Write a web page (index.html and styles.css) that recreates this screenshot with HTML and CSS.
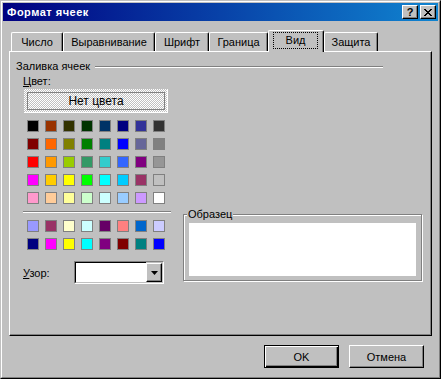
FILE: index.html
```html
<!DOCTYPE html>
<html lang="ru">
<head>
  <meta charset="UTF-8">
  <title>Формат ячеек</title>
  <link rel="stylesheet" href="styles.css">
</head>
<body>
  <div class="window">
    <div class="frame">
      <div class="caption">
        <span class="title">Формат ячеек</span>
        <span class="cap-btn help">?</span>
        <span class="cap-btn close">
          <svg width="8" height="7" viewBox="0 0 8 7"><path d="M0 0h2v1h-2zM6 0h2v1h-2zM1 1h2v1h-2zM5 1h2v1h-2zM2 2h4v1h-4zM3 3h2v1h-2zM2 4h4v1h-4zM1 5h2v1h-2zM5 5h2v1h-2zM0 6h2v1h-2zM6 6h2v1h-2z" fill="#000"/></svg>
        </span>
      </div>

      <div class="client">
        <div class="tabs">
          <div class="tab w-chislo">Число</div>
          <div class="tab w-align">Выравнивание</div>
          <div class="tab w-font">Шрифт</div>
          <div class="tab w-border">Граница</div>
          <div class="tab active w-view"><span class="focus">Вид</span></div>
          <div class="tab w-protect">Защита</div>
        </div>

        <div class="page">
          <div class="group-head">
            <span>Заливка ячеек</span>
            <div class="etched"></div>
          </div>

          <div class="fill">
            <div class="left">
              <div class="lbl"><u>Ц</u>вет:</div>
              <div class="nocolor"><div class="nocolor-inner">Нет цвета</div></div>

              <div class="palette" id="pal1"></div>
              <div class="sep"></div>
              <div class="palette second" id="pal2"></div>

              <div class="pattern-row">
                <span class="pattern-lbl"><u>У</u>зор:</span>
                <div class="combo">
                  <div class="combo-field"></div>
                  <div class="combo-btn">
                    <svg width="7" height="4" viewBox="0 0 7 4"><path d="M0 0h7l-3.5 4z" fill="#000"/></svg>
                  </div>
                </div>
              </div>
            </div>

            <div class="sample">
              <span class="sample-lbl">Образец</span>
              <div class="sample-box"></div>
            </div>
          </div>
        </div>

        <div class="buttons">
          <div class="btn default">OK</div>
          <div class="btn">Отмена</div>
        </div>
      </div>
    </div>
  </div>

  <script>
    const rows1 = [
      ['#000000', '#993300', '#333300', '#003300', '#003366', '#000080', '#333399', '#333333'],
      ['#800000', '#ff6600', '#808000', '#008000', '#008080', '#0000ff', '#666699', '#808080'],
      ['#ff0000', '#ff9900', '#99cc00', '#339966', '#33cccc', '#3366ff', '#800080', '#969696'],
      ['#ff00ff', '#ffcc00', '#ffff00', '#00ff00', '#00ffff', '#00ccff', '#993366', '#c0c0c0'],
      ['#ff99cc', '#ffcc99', '#ffff99', '#ccffcc', '#ccffff', '#99ccff', '#cc99ff', '#ffffff']
    ];
    const rows2 = [
      ['#9999ff', '#993366', '#ffffcc', '#ccffff', '#660066', '#ff8080', '#0066cc', '#ccccff'],
      ['#000080', '#ff00ff', '#ffff00', '#00ffff', '#800080', '#800000', '#008080', '#0000ff']
    ];

    function fillPalette(id, rows) {
      const el = document.getElementById(id);
      rows.flat().forEach(c => {
        const sw = document.createElement('div');
        sw.className = 'swatch';
        sw.style.background = c;
        el.appendChild(sw);
      });
    }
    fillPalette('pal1', rows1);
    fillPalette('pal2', rows2);
  </script>
</body>
</html>
```

FILE: styles.css
```css
/* Win98-style "Format cells" dialog */
body { margin: 0; font-family: "Liberation Sans", Arial, sans-serif; font-size: 11px; color: #000; background: #c0c0c0; }

.window { width: 441px; height: 379px; box-sizing: border-box; border: 1px solid; border-color: #c0c0c0 #000 #000 #c0c0c0; background: #c0c0c0; }
.frame { height: 100%; box-sizing: border-box; border: 1px solid; border-color: #fff #808080 #808080 #fff; padding: 1px; display: flex; flex-direction: column; }

/* title bar */
.caption { height: 18px; flex-shrink: 0; background: linear-gradient(to right, #000080, #1084d0); display: flex; align-items: center; padding: 0 2px 0 3px; }
.title { flex: 1; color: #fff; font-weight: bold; letter-spacing: 0.5px; padding-left: 1px; }
.cap-btn { width: 16px; height: 14px; box-sizing: border-box; background: #c0c0c0; border: 1px solid; border-color: #fff #000 #000 #fff; box-shadow: inset -1px -1px #808080; display: flex; align-items: center; justify-content: center; }
.cap-btn + .cap-btn { margin-left: 2px; }
.help { font-weight: bold; font-size: 11px; line-height: 12px; }

/* client */
.client { flex: 1; padding: 9px 14px 0 6px; }

.tabs { display: flex; align-items: flex-end; height: 21px; padding-left: 2px; }
.tab { height: 19px; box-sizing: border-box; border: 1px solid; border-bottom: 0; border-color: #fff #000 #000 #fff; border-radius: 2px 2px 0 0; box-shadow: inset -1px 0 #808080; background: #c0c0c0; display: flex; justify-content: center; padding-top: 3px; }
.tab.active { height: 22px; margin-bottom: -1px; position: relative; z-index: 1; padding-top: 1px; }
.focus { display: block; width: 45px; height: 17px; box-sizing: border-box; border: 1px dotted #000; text-align: center; line-height: 15px; margin-left: -1px; }
.w-chislo { width: 52px; }
.w-align { width: 92px; }
.w-font { width: 54px; }
.w-border { width: 59px; }
.w-view { width: 56px; }
.w-protect { width: 54px; }

/* tab page */
.page { width: 423px; height: 285px; box-sizing: border-box; border: 1px solid; border-color: #fff #000 #000 #fff; box-shadow: inset -1px -1px #808080; padding: 8px 0 0 6px; }

.group-head { display: flex; align-items: center; width: 367px; height: 13px; line-height: 13px; }
.etched { flex: 1; border-top: 1px solid #808080; border-bottom: 1px solid #fff; margin-left: 5px; }

.fill { display: flex; }
.left { width: 148px; margin-left: 7px; }
.lbl { margin-top: 2px; height: 13px; line-height: 13px; }

.nocolor { width: 144px; height: 24px; box-sizing: border-box; margin: 1px 0 0 1px; padding: 3px 2px 2px 3px; background: repeating-conic-gradient(#fff 0 25%, #c0c0c0 0 50%) 0 0 / 2px 2px; border-right: 1px solid #fff; border-bottom: 1px solid #fff; }
.nocolor-inner { height: 18px; box-sizing: border-box; border: 1px solid #808080; background: repeating-conic-gradient(#fff 0 25%, #c0c0c0 0 50%) 0 0 / 2px 2px; text-align: center; line-height: 16px; font-size: 12px; }

.palette { display: grid; grid-template-columns: repeat(8, 12px); grid-auto-rows: 12px; gap: 6px; margin: 7px 0 0 4px; }
.palette.second { margin-top: 7px; }
.swatch { box-sizing: border-box; border: 1px solid #808080; }
.sep { width: 148px; margin-top: 7px; border-top: 1px solid #808080; border-bottom: 1px solid #fff; }

.pattern-row { display: flex; align-items: center; margin-top: 11px; }
.pattern-lbl { width: 51px; }
.combo { width: 90px; height: 23px; box-sizing: border-box; border: 1px solid; border-color: #808080 #fff #fff #808080; display: flex; box-shadow: inset 0 -1px #c0c0c0; }
.combo-field { flex: 1; border: 1px solid; border-right: 0; border-color: #000 #c0c0c0 #c0c0c0 #000; background: #fff; }
.combo-btn { width: 16px; box-sizing: border-box; margin: 1px 1px 1px 0; border: 1px solid; border-color: #fff #000 #000 #fff; box-shadow: inset -1px -1px #808080; background: #c0c0c0; display: flex; align-items: center; justify-content: center; }

.sample { width: 239px; height: 67px; box-sizing: border-box; margin: 141px 0 0 12px; border: 1px solid #808080; box-shadow: inset 1px 1px #fff, 1px 1px #fff; }
.sample-lbl { display: block; width: fit-content; margin: -7px 0 0 3px; padding: 0 1px; background: #c0c0c0; line-height: 13px; }
.sample-box { width: 227px; height: 53px; margin: 2px 0 0 5px; background: #fff; }

/* dialog buttons */
.buttons { display: flex; justify-content: flex-end; gap: 10px; margin-top: 9px; }
.btn { width: 75px; height: 23px; box-sizing: border-box; border: 1px solid; border-color: #fff #000 #000 #fff; box-shadow: inset -1px -1px #808080; background: #c0c0c0; display: flex; align-items: center; justify-content: center; }
.btn.default { border-color: #000; box-shadow: inset 1px 1px #fff, inset -1px -1px #000, inset -2px -2px #808080; }
```
